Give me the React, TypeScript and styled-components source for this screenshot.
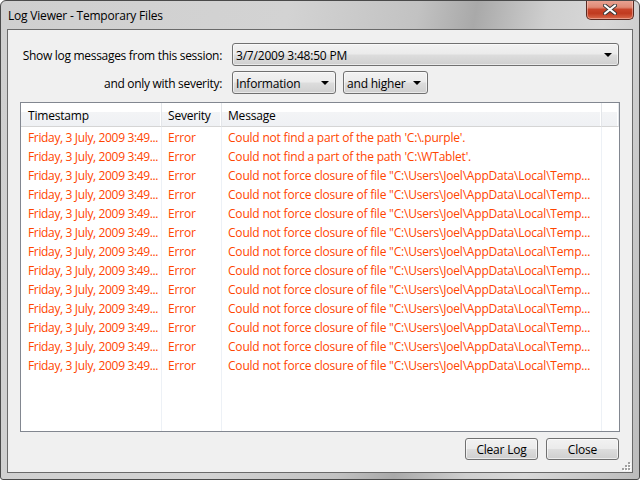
import React from "react";
import styled, { createGlobalStyle } from "styled-components";

const Global = createGlobalStyle`
  html, body { margin: 0; padding: 0; background: #ffffff; }
  body { font-family: "Open Sans", "Noto Sans", sans-serif; font-size: 12px; color: #000; }
  * { box-sizing: border-box; }
`;

const Window = styled.div`
  width: 640px;
  height: 480px;
  border: 1px solid #4a4a4a;
  border-radius: 6px 6px 3px 3px;
  background: linear-gradient(
    100deg,
    #cfcfcf 0%,
    #d3d3d3 40%,
    #c2c2c2 58%,
    #a9a9a9 66%,
    #cfcfcf 76%,
    #d8d8d8 84%,
    #bcbcbc 100%
  );
  display: flex;
  flex-direction: column;
  overflow: hidden;
`;

const TitleBar = styled.div`
  height: 28px;
  display: flex;
  align-items: flex-start;
  padding-left: 7px;
`;

const TitleText = styled.div`
  margin-top: 6px;
  font-size: 12px;
  letter-spacing: -0.2px;
  color: #000;
`;

const CloseButton = styled.div`
  margin-left: auto;
  margin-right: 5px;
  margin-top: -1px;
  width: 48px;
  height: 20px;
  border: 1px solid #5a2a22;
  border-top: none;
  border-radius: 0 0 5px 5px;
  background: linear-gradient(
    180deg,
    #eaa596 0%,
    #e08a75 38%,
    #c9442a 50%,
    #c03a1f 70%,
    #d9694b 100%
  );
  box-shadow: inset 0 0 0 1px rgba(255, 220, 210, 0.45);
  display: flex;
  align-items: center;
  justify-content: center;
`;

const ClientFrame = styled.div`
  position: relative;
  flex: 1;
  margin: 0 6px 6px 6px;
  border: 1px solid #6a6a6a;
  background: #f0f0f0;
  display: flex;
  flex-direction: column;
  padding: 13px 12px 12px 12px;
`;

const Form = styled.div`
  display: grid;
  grid-template-columns: 202px auto;
  column-gap: 10px;
  row-gap: 5px;
  align-items: center;
`;

const Label = styled.div`
  text-align: right;
  white-space: nowrap;
  font-size: 12px;
  letter-spacing: -0.3px;
  padding-top: 1px;
`;

const ComboRow = styled.div`
  display: flex;
  gap: 7px;
`;

const Combo = styled.div<{ $w: number }>`
  width: ${(p) => p.$w}px;
  height: 23px;
  border: 1px solid #707070;
  border-radius: 3px;
  background: linear-gradient(180deg, #f2f2f2 0%, #ebebeb 48%, #dddddd 52%, #cfcfcf 100%);
  box-shadow: inset 0 0 0 1px rgba(255, 255, 255, 0.55);
  display: flex;
  align-items: center;
  padding: 1px 6px 0 3px;
  font-size: 12px;
  letter-spacing: -0.2px;
`;

const ComboText = styled.span`
  flex: 1;
  white-space: nowrap;
`;

const Arrow = styled.span`
  width: 0;
  height: 0;
  border-left: 4px solid transparent;
  border-right: 4px solid transparent;
  border-top: 4px solid #000;
`;

const ListView = styled.div`
  margin-top: 8px;
  height: 330px;
  border: 1px solid #828790;
  background: #ffffff;
  display: grid;
  grid-template-columns: 141px 60px 380px 1fr;
  grid-template-rows: 24px 1fr;
  overflow: hidden;
`;

const HeaderCell = styled.div<{ $pad: number }>`
  height: 24px;
  border-bottom: 1px solid #d5d5d5;
  border-right: 1px solid #e3e6ea;
  background: linear-gradient(180deg, #ffffff 0%, #ffffff 40%, #f3f4f6 41%, #eff1f4 100%);
  padding: 1px 0 0 ${(p) => p.$pad}px;
  display: flex;
  align-items: center;
  font-size: 12px;
  letter-spacing: -0.2px;
  color: #000;
  white-space: nowrap;
  overflow: hidden;
  box-shadow: inset -1px 0 0 #ffffff;
`;

const BodyColumn = styled.div<{ $last?: boolean }>`
  border-right: ${(p) => (p.$last ? "none" : "1px solid #edf1f6")};
  display: flex;
  flex-direction: column;
  overflow: hidden;
`;

const Cell = styled.div<{ $pad: number; $ls: number }>`
  height: 19px;
  line-height: 19px;
  padding-top: 1px;
  padding-left: ${(p) => p.$pad}px;
  color: #ff4500;
  font-size: 12px;
  letter-spacing: ${(p) => p.$ls}px;
  white-space: nowrap;
`;

const ButtonRow = styled.div`
  margin-top: 6px;
  display: flex;
  justify-content: flex-end;
  gap: 8px;
  padding-right: 1px;
`;

const Button = styled.div`
  width: 73px;
  height: 22px;
  border: 1px solid #707070;
  border-radius: 3px;
  background: linear-gradient(180deg, #f2f2f2 0%, #ebebeb 48%, #dddddd 52%, #cfcfcf 100%);
  box-shadow: inset 0 0 0 1px rgba(255, 255, 255, 0.6);
  display: flex;
  align-items: center;
  justify-content: center;
  padding-top: 1px;
  font-size: 12px;
  letter-spacing: -0.2px;
`;

const Grip = styled.svg`
  position: absolute;
  right: 1px;
  bottom: 1px;
`;

const forceClose = 'Could not force closure of file "C:\\Users\\Joel\\AppData\\Local\\Temp...';

const messages = [
  "Could not find a part of the path 'C:\\.purple'.",
  "Could not find a part of the path 'C:\\WTablet'.",
  ...Array.from({ length: 11 }, () => forceClose),
];

const stamp = "Friday, 3 July, 2009 3:49...";

export default function App() {
  return (
    <>
      <Global />
      <Window>
        <TitleBar>
          <TitleText>Log Viewer - Temporary Files</TitleText>
          <CloseButton>
            <svg width="14" height="11" viewBox="0 0 14 11">
              <path
                d="M2 1.5 L12 9.5 M12 1.5 L2 9.5"
                stroke="#3a3a3a"
                strokeWidth="4"
                strokeLinecap="round"
              />
              <path
                d="M2 1.5 L12 9.5 M12 1.5 L2 9.5"
                stroke="#ffffff"
                strokeWidth="2.2"
                strokeLinecap="round"
              />
            </svg>
          </CloseButton>
        </TitleBar>
        <ClientFrame>
          <Form>
            <Label>Show log messages from this session:</Label>
            <Combo $w={387}>
              <ComboText>3/7/2009 3:48:50 PM</ComboText>
              <Arrow />
            </Combo>
            <Label>and only with severity:</Label>
            <ComboRow>
              <Combo $w={104}>
                <ComboText>Information</ComboText>
                <Arrow />
              </Combo>
              <Combo $w={85}>
                <ComboText>and higher</ComboText>
                <Arrow />
              </Combo>
            </ComboRow>
          </Form>
          <ListView>
            <HeaderCell $pad={7}>Timestamp</HeaderCell>
            <HeaderCell $pad={6}>Severity</HeaderCell>
            <HeaderCell $pad={6}>Message</HeaderCell>
            <HeaderCell $pad={0} />
            <BodyColumn>
              {messages.map((_, i) => (
                <Cell key={i} $pad={7} $ls={-0.35}>
                  {stamp}
                </Cell>
              ))}
            </BodyColumn>
            <BodyColumn>
              {messages.map((_, i) => (
                <Cell key={i} $pad={6} $ls={-0.2}>
                  Error
                </Cell>
              ))}
            </BodyColumn>
            <BodyColumn>
              {messages.map((m, i) => (
                <Cell key={i} $pad={6} $ls={-0.2}>
                  {m}
                </Cell>
              ))}
            </BodyColumn>
            <BodyColumn $last />
          </ListView>
          <ButtonRow>
            <Button>Clear Log</Button>
            <Button>Close</Button>
          </ButtonRow>
          <Grip width="10" height="10" viewBox="0 0 10 10">
            {[
              [7, 1],
              [4, 4],
              [7, 4],
              [1, 7],
              [4, 7],
              [7, 7],
            ].map(([x, y], i) => (
              <g key={i}>
                <rect x={x + 1} y={y + 1} width="2" height="2" fill="#ffffff" />
                <rect x={x} y={y} width="2" height="2" fill="#a0a0a0" />
              </g>
            ))}
          </Grip>
        </ClientFrame>
      </Window>
    </>
  );
}
